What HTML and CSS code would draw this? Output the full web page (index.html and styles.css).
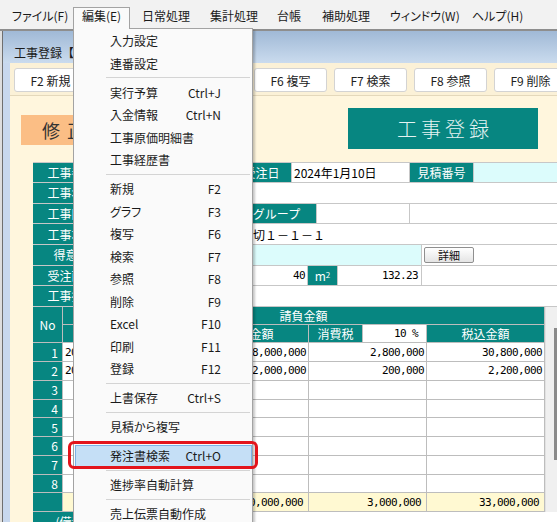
FILE: index.html
```html
<!DOCTYPE html>
<html lang="ja">
<head>
<meta charset="utf-8">
<title>工事登録</title>
<link rel="stylesheet" href="styles.css">
</head>
<body>
<div class="app">
  <div class="menubar">
    <div class="mi w-file">ファイル(F)</div>
    <div class="mi w-edit open">編集(E)</div>
    <div class="mi w-daily">日常処理</div>
    <div class="mi w-sum">集計処理</div>
    <div class="mi w-ledger">台帳</div>
    <div class="mi w-aux">補助処理</div>
    <div class="mi w-win">ウィンドウ(W)</div>
    <div class="mi">ヘルプ(H)</div>
  </div>

  <div class="window">
    <div class="titlebar">工事登録【修正】</div>
    <div class="client">
      <div class="toolbar">
        <div class="fbtn">F2 新規</div>
        <div class="fbtn">F3 グラフ</div>
        <div class="fbtn">F4 明細</div>
        <div class="fbtn">F6 複写</div>
        <div class="fbtn">F7 検索</div>
        <div class="fbtn">F8 参照</div>
        <div class="fbtn">F9 削除</div>
      </div>
      <div class="content">
        <div class="head">
          <div class="mode">修正</div>
          <div class="title">工事登録</div>
        </div>

        <div class="form">
          <div class="frow">
            <div class="c lbl w78">工事番号</div>
            <div class="c w121">24-0001</div>
            <div class="c lbl w60">受注日</div>
            <div class="c w118 val">2024年1月10日</div>
            <div class="c lbl w64">見積番号</div>
            <div class="c cy grow"></div>
          </div>
          <div class="frow">
            <div class="c lbl w78">工事名称</div>
            <div class="c grow"></div>
          </div>
          <div class="frow">
            <div class="c lbl w78">工事区分</div>
            <div class="c w126"></div>
            <div class="c lbl w80">グループ</div>
            <div class="c w93"></div>
            <div class="c grow"></div>
          </div>
          <div class="frow">
            <div class="c lbl w78">工事場所</div>
            <div class="c w92">〒124-0006</div>
            <div class="c grow val">葛飾区堀切１－１－１</div>
          </div>
          <div class="frow">
            <div class="c lbl w78">得意先</div>
            <div class="c cy w311"></div>
            <div class="c w56 nob"><div class="btn-detail">詳細</div></div>
            <div class="c grow"></div>
          </div>
          <div class="frow">
            <div class="c lbl w78">受注面積</div>
            <div class="c w197 r mono pr2">40</div>
            <div class="c lbl w30">m<sup>2</sup></div>
            <div class="c w84 r mono pr3">132.23</div>
            <div class="c grow"></div>
          </div>
          <div class="frow">
            <div class="c lbl w78">工事担当</div>
            <div class="c grow"></div>
          </div>
        </div>

        <div class="gridrow">
          <div class="grid">
            <div class="g gh no">No</div>
            <div class="g gh span6">請負金額</div>
            <div class="g gh">契約日</div>
            <div class="g gh">区分</div>
            <div class="g gh">契約金額</div>
            <div class="g gh">消費税</div>
            <div class="g r mono pct">10 %</div>
            <div class="g gh">税込金額</div>

            <div class="g gn">1</div><div class="g mono">2024/01/10</div><div class="g"></div><div class="g r mono">28,000,000</div><div class="g r mono span2">2,800,000</div><div class="g r mono cy">30,800,000</div>
            <div class="g gn">2</div><div class="g mono">2024/01/10</div><div class="g"></div><div class="g r mono">2,000,000</div><div class="g r mono span2">200,000</div><div class="g r mono cy">2,200,000</div>
            <div class="g gn">3</div><div class="g"></div><div class="g"></div><div class="g"></div><div class="g span2"></div><div class="g cy"></div>
            <div class="g gn">4</div><div class="g"></div><div class="g"></div><div class="g"></div><div class="g span2"></div><div class="g cy"></div>
            <div class="g gn">5</div><div class="g"></div><div class="g"></div><div class="g"></div><div class="g span2"></div><div class="g cy"></div>
            <div class="g gn">6</div><div class="g"></div><div class="g"></div><div class="g"></div><div class="g span2"></div><div class="g cy"></div>
            <div class="g gn">7</div><div class="g"></div><div class="g"></div><div class="g"></div><div class="g span2"></div><div class="g cy"></div>
            <div class="g gn">8</div><div class="g"></div><div class="g"></div><div class="g"></div><div class="g span2"></div><div class="g cy"></div>
            <div class="g gn"></div><div class="g ye span2"></div><div class="g ye r mono tot">30,000,000</div><div class="g ye r mono span2 tot">3,000,000</div><div class="g ye r mono tot">33,000,000</div>
          </div>
          <div class="vscroll"><div class="thumb"></div></div>
        </div>

        <div class="form form-end">
          <div class="frow">
            <div class="c lbl w78">(備考)</div>
            <div class="c grow"></div>
          </div>
        </div>
      </div>
    </div>
  </div>

  <div class="dropdown">
    <div class="dd-item"><span>入力設定</span></div>
    <div class="dd-item"><span>連番設定</span></div>
    <div class="dd-sep"></div>
    <div class="dd-item"><span>実行予算</span><span>Ctrl+J</span></div>
    <div class="dd-item"><span>入金情報</span><span>Ctrl+N</span></div>
    <div class="dd-item"><span>工事原価明細書</span></div>
    <div class="dd-item"><span>工事経歴書</span></div>
    <div class="dd-sep"></div>
    <div class="dd-item"><span>新規</span><span>F2</span></div>
    <div class="dd-item"><span>グラフ</span><span>F3</span></div>
    <div class="dd-item"><span>複写</span><span>F6</span></div>
    <div class="dd-item"><span>検索</span><span>F7</span></div>
    <div class="dd-item"><span>参照</span><span>F8</span></div>
    <div class="dd-item"><span>削除</span><span>F9</span></div>
    <div class="dd-item"><span>Excel</span><span>F10</span></div>
    <div class="dd-item"><span>印刷</span><span>F11</span></div>
    <div class="dd-item"><span>登録</span><span>F12</span></div>
    <div class="dd-sep"></div>
    <div class="dd-item"><span>上書保存</span><span>Ctrl+S</span></div>
    <div class="dd-sep"></div>
    <div class="dd-item"><span>見積から複写</span></div>
    <div class="dd-sep"></div>
    <div class="dd-item hot"><span>発注書検索</span><span>Ctrl+O</span></div>
    <div class="dd-sep"></div>
    <div class="dd-item"><span>進捗率自動計算</span></div>
    <div class="dd-sep"></div>
    <div class="dd-item"><span>売上伝票自動作成</span></div>
  </div>
  <div class="ring"></div>
</div>
</body>
</html>
```

FILE: styles.css
```css
* { box-sizing: border-box; }
html, body { margin: 0; padding: 0; }
body {
  width: 557px;
  height: 522px;
  overflow: hidden;
  position: relative;
  background: #dedede;
  font-family: "Noto Sans CJK JP", "Noto Sans", sans-serif;
  font-size: 12px;
  color: #111;
}
.app { width: 640px; }

/* menu bar */
.menubar {
  display: flex;
  height: 31px;
  padding: 7px 0 0 3px;
  background: #f2f2f2;
  border-bottom: 2px solid #8e8e8e;
  font-feature-settings: "palt";
  color: #1a1a1a;
}
.mi {
  flex: none;
  height: 22px;
  padding: 0 0 0 8px;
  border: 1px solid transparent;
  border-bottom: 0;
  line-height: 16px;
  white-space: nowrap;
}
.mi.open {
  position: relative;
  z-index: 6;
  background: #fafafa;
  border-color: #a3a3a3;
}
.w-file { width: 70px; }
.w-edit { width: 57px; margin-right: 3px; }
.w-daily { width: 68px; }
.w-sum { width: 67px; }
.w-ledger { width: 45px; }
.w-aux { width: 68px; }
.w-win { width: 82px; }

/* child window */
.window {
  margin-left: 2px;
  border-left: 1px solid #6f6f6f;
  background: #c8d8ee;
}
.titlebar {
  height: 32px;
  padding: 14px 0 0 11px;
  line-height: 16px;
  background: linear-gradient(#a0b9d6, #cadbee);
  color: #1b1b1b;
  white-space: nowrap;
}
.client { margin-left: 7px; }
.toolbar {
  height: 33px;
  display: flex;
  gap: 7px;
  padding: 5px 0 0 4px;
  background: #fbf1d7;
  border-bottom: 1px solid #e4d8bb;
}
.fbtn {
  flex: none;
  width: 73px;
  height: 24px;
  background: #fff;
  border: 1px solid #d3d3d3;
  border-radius: 3px;
  display: flex;
  align-items: center;
  justify-content: center;
  white-space: nowrap;
  color: #222;
}
.content {
  background: #fff6dd;
  height: 440px;
}
.head {
  display: flex;
  align-items: flex-start;
  height: 65.6px;
  padding-left: 11px;
}
.mode {
  flex: none;
  margin-top: 19px;
  width: 100px;
  height: 30px;
  background: #fbbe85;
  font-size: 18px;
  letter-spacing: 7px;
  padding-left: 21px;
  line-height: 30px;
  color: #333;
  white-space: nowrap;
}
.title {
  flex: none;
  margin-top: 12px;
  margin-left: 227px;
  width: 190px;
  height: 41px;
  background: #078681;
  color: #e4f3f2;
  font-size: 20px;
  font-weight: 300;
  letter-spacing: 4px;
  padding-left: 4px;
  display: flex;
  align-items: center;
  justify-content: center;
}

/* form */
.form {
  margin-left: 23px;
  width: 567px;
  border-top: 1px solid #c7c7c7;
}
.form-end { border-top: 0; }
.frow {
  display: flex;
  height: 20.6px;
  border-bottom: 1px solid #c7c7c7;
}
.c {
  flex: none;
  height: 100%;
  border-right: 1px solid #c7c7c7;
  display: flex;
  align-items: center;
  padding: 0 3px;
  white-space: nowrap;
  overflow: hidden;
  background: #fff;
  color: #000;
}
.val { padding-left: 2px; }
.lbl { background: #078681; color: #fff; justify-content: center; padding: 0; }
.cy { background: #dcfcfc; }
.grow { flex: 1; }
.r { justify-content: flex-end; }
.pr2 { padding-right: 2px; }
.pr3 { padding-right: 3px; }
.nob { border-right: 0; padding: 0 0 0 2px; }
.w30 { width: 30px; }
.w56 { width: 56px; }
.w60 { width: 60px; }
.w64 { width: 64px; }
.w78 { width: 78px; }
.w80 { width: 80px; }
.w84 { width: 84px; }
.w92 { width: 92px; }
.w93 { width: 93px; }
.w118 { width: 118px; }
.w121 { width: 121px; }
.w126 { width: 126px; }
.w197 { width: 197px; }
.w311 { width: 311px; }
.lbl sup { font-size: 8px; line-height: 0; vertical-align: 4px; }
.mono {
  font-family: "DejaVu Sans Mono", monospace;
  font-size: 11px;
  letter-spacing: -0.62px;
}
.btn-detail {
  width: 50px;
  height: 16px;
  border: 1px solid #8f8f8f;
  border-radius: 2px;
  background: linear-gradient(#ffffff, #e4e4e4);
  font-size: 11px;
  line-height: 14px;
  text-align: center;
  color: #111;
}

/* grid */
.gridrow { display: flex; margin-left: 23px; }
.grid {
  flex: none;
  display: grid;
  width: 512px;
  grid-template-columns: 30px 67px 61px 118px 54px 64px 118px;
  grid-template-rows: 18.25px 18.25px repeat(9, 18.75px);
}
.g {
  border-right: 1px solid #bdbdbd;
  border-bottom: 1px solid #bdbdbd;
  display: flex;
  align-items: center;
  padding: 0 2px;
  white-space: nowrap;
  overflow: hidden;
  background: #fff;
  color: #000;
}
.gh { background: #078681; color: #fff; justify-content: center; padding: 0; }
.no { grid-row: span 2; }
.span6 { grid-column: span 6; }
.span2 { grid-column: span 2; }
.pct { padding-right: 8px; }
.gn { background: #078681; color: #fff; justify-content: flex-end; padding-right: 4px; }
.ye { background: #fff9d2; }
.tot { padding-right: 5px; }
.vscroll {
  flex: none;
  width: 12px;
  height: 205.25px;
  background: #f0f0f0;
  border-left: 1px solid #e2e2e2;
  padding: 21px 0 0 8px;
}
.thumb { width: 4px; height: 132px; background: #8b8b8b; }

/* dropdown menu */
.dropdown {
  position: absolute;
  left: 73px;
  top: 28px;
  width: 180px;
  height: 520px;
  background: #fafafa;
  border: 1px solid #a3a3a3;
  box-shadow: 2px 2px 2px rgba(0, 0, 0, 0.22);
  padding-top: 0.5px;
  z-index: 5;
  font-feature-settings: "palt";
  color: #1a1a1a;
}
.dd-item {
  height: 22.5px;
  display: flex;
  align-items: center;
  justify-content: space-between;
  padding: 0 31px 0 36px;
  white-space: nowrap;
}
.dd-item.hot {
  background: #c5dff6;
  border: 1px solid #7bb2e6;
  margin-left: 1px;
  padding: 0 30px 0 34px;
}
.dd-sep {
  height: 6.5px;
  display: flex;
  align-items: center;
  margin: 0 2px 0 32px;
}
.dd-sep::before {
  content: "";
  flex: 1;
  height: 1px;
  background: #d4d4d4;
}
.ring {
  position: absolute;
  left: 68px;
  top: 441px;
  width: 190px;
  height: 28px;
  border: 3px solid #e3141b;
  border-radius: 6px;
  z-index: 7;
}
```
